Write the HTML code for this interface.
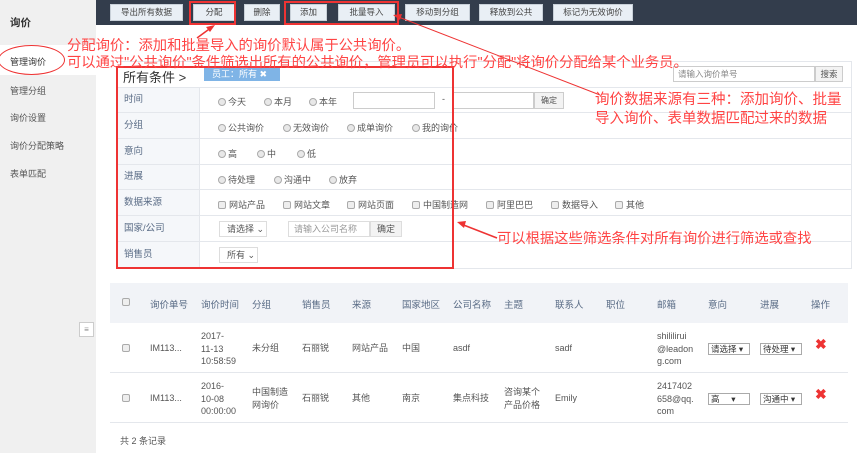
<!DOCTYPE html>
<html><head><meta charset="utf-8"><style>
*{margin:0;padding:0;box-sizing:border-box}
body{width:857px;height:453px;overflow:hidden;position:relative;background:#fff;font-family:"Liberation Sans","Noto Sans CJK SC",sans-serif;font-size:9px;color:#555}
.a{position:absolute}
.side{left:0;top:0;width:96px;height:453px;background:#f0f0f0}
.top{left:96px;top:0;width:761px;height:25px;background:#333d4c}
.btn{position:absolute;top:4px;height:17px;background:#e9eff5;border:1px solid #c8d0d8;font-size:8.5px;color:#444;text-align:center;line-height:15px}
.row{position:absolute;left:116px;width:736px;border-bottom:1px solid #e4e7ec;border-right:1px solid #e4e7ec;background:#fff}
.lab{position:absolute;left:0;top:0;bottom:0;width:84px;background:#f5f7fa;border-right:1px solid #e4e7ec;padding-left:8px;color:#5a6c86;font-size:9.5px}
.rd{display:inline-block;width:8px;height:8px;border-radius:50%;border:1px solid #aaa;background:#e8e8e8;vertical-align:-1px;margin-right:2px}
.cb{display:inline-block;width:8px;height:8px;border-radius:2px;border:1px solid #aaa;background:#eee;vertical-align:-1px;margin-right:3px}
.red{color:#f44;white-space:nowrap}
.th{color:#5a6c86;font-size:9.5px}
.sel{position:absolute;height:12px;border:1px solid #aaa;background:#fff;font-size:8.5px;line-height:10px;padding-left:2px;color:#333}
.x{color:#e33;font-size:14px;font-weight:bold}
.o{left:-6px}
</style></head><body>
<div class="a side"></div>
<div class="a" style="left:0;top:45px;width:96px;height:30px;background:#fff"></div>
<div class="a" style="left:10px;top:15px;font-size:10.5px;font-weight:bold;color:#333">询价</div>
<div class="a" style="left:10px;top:55px;color:#333">管理询价</div>
<div class="a" style="left:10px;top:84px">管理分组</div>
<div class="a" style="left:10px;top:111px">询价设置</div>
<div class="a" style="left:10px;top:139px">询价分配策略</div>
<div class="a" style="left:10px;top:167px">表单匹配</div>
<div class="a" style="left:79px;top:322px;width:15px;height:15px;border:1px solid #ccc;background:#fff;font-size:8px;text-align:center;line-height:13px;color:#888">≡</div>
<div class="a top"></div>
<div class="btn" style="left:110px;width:73px">导出所有数据</div>
<div class="btn" style="left:193px;width:42px">分配</div>
<div class="btn" style="left:244px;width:36px">删除</div>
<div class="btn" style="left:290px;width:37px">添加</div>
<div class="btn" style="left:338px;width:57px">批量导入</div>
<div class="btn" style="left:405px;width:65px">移动到分组</div>
<div class="btn" style="left:479px;width:64px">释放到公共</div>
<div class="btn" style="left:553px;width:80px">标记为无效询价</div>
<div class="a" style="left:116px;top:61px;width:736px;height:1px;background:#e4e7ec"></div>
<div class="row" style="top:62px;height:26px"><div class="a" style="left:7px;top:5px;font-size:13px;color:#333">所有条件 &gt;</div>
<div class="a" style="left:88px;top:5px;width:76px;height:14px;background:#7fb4e6;color:#fff;font-size:9px;line-height:14px;padding-left:8px">员工：所有 ✖</div>
<div class="a" style="left:557px;top:4px;width:142px;height:16px;border:1px solid #ccc;font-size:8.5px;color:#888;line-height:14px;padding-left:4px">请输入询价单号</div>
<div class="a" style="left:699px;top:4px;width:28px;height:16px;border:1px solid #ccc;background:#f3f3f3;font-size:8.5px;line-height:14px;text-align:center">搜索</div></div>
<div class="row" style="top:88px;height:25px"><div class="lab" style="line-height:24px">时间</div>
<div class="a" style="left:102px;top:7px"><span class="rd"></span>今天</div><div class="a" style="left:148px;top:7px"><span class="rd"></span>本月</div><div class="a" style="left:193px;top:7px"><span class="rd"></span>本年</div>
<div class="a" style="left:237px;top:4px;width:82px;height:17px;border:1px solid #ccc"></div><div class="a" style="left:326px;top:6px">-</div>
<div class="a" style="left:336px;top:4px;width:82px;height:17px;border:1px solid #ccc"></div>
<div class="a" style="left:418px;top:4px;width:30px;height:17px;border:1px solid #ccc;background:#f3f3f3;text-align:center;line-height:15px;font-size:8px">确定</div></div>
<div class="row" style="top:113px;height:26px"><div class="lab" style="line-height:25px">分组</div>
<div class="a" style="left:102px;top:8px"><span class="rd"></span>公共询价</div><div class="a" style="left:167px;top:8px"><span class="rd"></span>无效询价</div><div class="a" style="left:231px;top:8px"><span class="rd"></span>成单询价</div><div class="a" style="left:296px;top:8px"><span class="rd"></span>我的询价</div></div>
<div class="row" style="top:139px;height:26px"><div class="lab" style="line-height:25px">意向</div>
<div class="a" style="left:102px;top:8px"><span class="rd"></span>高</div><div class="a" style="left:141px;top:8px"><span class="rd"></span>中</div><div class="a" style="left:181px;top:8px"><span class="rd"></span>低</div></div>
<div class="row" style="top:165px;height:25px"><div class="lab" style="line-height:24px">进展</div>
<div class="a" style="left:102px;top:8px"><span class="rd"></span>待处理</div><div class="a" style="left:158px;top:8px"><span class="rd"></span>沟通中</div><div class="a" style="left:213px;top:8px"><span class="rd"></span>放弃</div></div>
<div class="row" style="top:190px;height:26px"><div class="lab" style="line-height:25px">数据来源</div>
<div class="a" style="left:102px;top:8px"><span class="cb"></span>网站产品</div><div class="a" style="left:167px;top:8px"><span class="cb"></span>网站文章</div><div class="a" style="left:231px;top:8px"><span class="cb"></span>网站页面</div><div class="a" style="left:296px;top:8px"><span class="cb"></span>中国制造网</div><div class="a" style="left:370px;top:8px"><span class="cb"></span>阿里巴巴</div><div class="a" style="left:435px;top:8px"><span class="cb"></span>数据导入</div><div class="a" style="left:499px;top:8px"><span class="cb"></span>其他</div></div>
<div class="row" style="top:216px;height:26px"><div class="lab" style="line-height:25px">国家/公司</div>
<div class="a" style="left:103px;top:5px;width:48px;height:16px;border:1px solid #ddd;padding-left:7px;line-height:14px">请选择 ⌄</div>
<div class="a" style="left:172px;top:5px;width:82px;height:16px;border:1px solid #ddd;padding-left:5px;line-height:14px;color:#999">请输入公司名称</div>
<div class="a" style="left:254px;top:5px;width:32px;height:16px;border:1px solid #ddd;background:#f3f3f3;text-align:center;line-height:14px">确定</div></div>
<div class="row" style="top:242px;height:27px"><div class="lab" style="line-height:26px">销售员</div>
<div class="a" style="left:103px;top:5px;width:39px;height:16px;border:1px solid #ddd;padding-left:7px;line-height:14px">所有 ⌄</div></div>
<!-- table -->
<div class="a" style="left:110px;top:283px;width:738px;height:40px;background:#f1f3f7"></div>
<div class="a" style="left:110px;top:372px;width:738px;height:1px;background:#e4e7ec"></div>
<div class="a" style="left:110px;top:422px;width:738px;height:1px;background:#e4e7ec"></div>
<div class="a th" style="top:297px;left:0;width:857px">
<span class="a cb" style="left:122px;top:1px"></span>
<span class="a" style="left:150px">询价单号</span><span class="a" style="left:201px">询价时间</span><span class="a" style="left:252px">分组</span><span class="a" style="left:302px">销售员</span><span class="a" style="left:352px">来源</span><span class="a" style="left:402px">国家地区</span><span class="a" style="left:453px">公司名称</span><span class="a" style="left:504px">主题</span><span class="a" style="left:555px">联系人</span><span class="a" style="left:606px">职位</span><span class="a" style="left:657px">邮箱</span><span class="a" style="left:708px">意向</span><span class="a" style="left:760px">进展</span><span class="a" style="left:811px">操作</span></div>
<div class="a" style="top:330px;left:0;width:857px;line-height:12.5px">
<span class="a cb" style="left:122px;top:14px"></span>
<span class="a" style="left:150px;top:12px">IM113...</span><span class="a" style="left:201px">2017-<br>11-13<br>10:58:59</span><span class="a" style="left:252px;top:12px">未分组</span><span class="a" style="left:302px;top:12px">石丽锐</span><span class="a" style="left:352px;top:12px">网站产品</span><span class="a" style="left:402px;top:12px">中国</span><span class="a" style="left:453px;top:12px">asdf</span><span class="a" style="left:555px;top:12px">sadf</span><span class="a" style="left:657px">shililirui<br>@leadon<br>g.com</span>
<span class="sel" style="left:708px;top:13px;width:42px">请选择 ▾</span><span class="sel" style="left:760px;top:13px;width:42px">待处理 ▾</span><span class="a x" style="left:815px;top:8px">✖</span></div>
<div class="a" style="top:380px;left:0;width:857px;line-height:12.5px">
<span class="a cb" style="left:122px;top:14px"></span>
<span class="a" style="left:150px;top:12px">IM113...</span><span class="a" style="left:201px">2016-<br>10-08<br>00:00:00</span><span class="a" style="left:252px;top:6px">中国制造<br>网询价</span><span class="a" style="left:302px;top:12px">石丽锐</span><span class="a" style="left:352px;top:12px">其他</span><span class="a" style="left:402px;top:12px">南京</span><span class="a" style="left:453px;top:12px">集点科技</span><span class="a" style="left:504px;top:6px">咨询某个<br>产品价格</span><span class="a" style="left:555px;top:12px">Emily</span><span class="a" style="left:657px">2417402<br>658@qq.<br>com</span>
<span class="sel" style="left:708px;top:13px;width:42px">高 &nbsp; &nbsp; ▾</span><span class="sel" style="left:760px;top:13px;width:42px">沟通中 ▾</span><span class="a x" style="left:815px;top:8px">✖</span></div>
<div class="a" style="left:120px;top:434px">共 2 条记录</div>
<!-- annotations -->
<div class="a" style="left:189px;top:1px;width:47px;height:24px;border:2px solid #e33"></div>
<div class="a" style="left:284px;top:1px;width:115px;height:24px;border:2px solid #e33"></div>
<div class="a" style="left:116px;top:66px;width:338px;height:203px;border:2px solid #e33"></div>
<div class="a" style="left:-2px;top:45px;width:67px;height:30px;border:1.5px solid #e33;border-radius:50%"></div>
<div class="a red" style="left:67px;top:34px;font-size:14.3px">分配询价：添加和批量导入的询价默认属于公共询价。</div>
<div class="a red" style="left:67px;top:51px;font-size:14.3px">可以通过"公共询价"条件筛选出所有的公共询价，管理员可以执行"分配"将询价分配给某个业务员。</div>
<div class="a red" style="left:595px;top:91px;line-height:19px;font-size:14.5px">询价数据来源有三种：添加询价、批量<br>导入询价、表单数据匹配过来的数据</div>
<div class="a red" style="left:497px;top:227px;font-size:14.3px">可以根据这些筛选条件对所有询价进行筛选或查找</div>
<svg class="a" style="left:0;top:0" width="857" height="453"><g stroke="#e33" stroke-width="1.5" fill="#e33">
<line x1="197" y1="38" x2="212" y2="27"/><polygon points="215,25 206,27 210,32" stroke="none"/>
<line x1="600" y1="95" x2="396" y2="16" stroke-width="1"/><polygon points="393,15 402,14 400,20" stroke="none"/>
<line x1="497" y1="238" x2="461" y2="224"/><polygon points="457,222 466,221 464,228" stroke="none"/>
</g></svg>
</body></html>
